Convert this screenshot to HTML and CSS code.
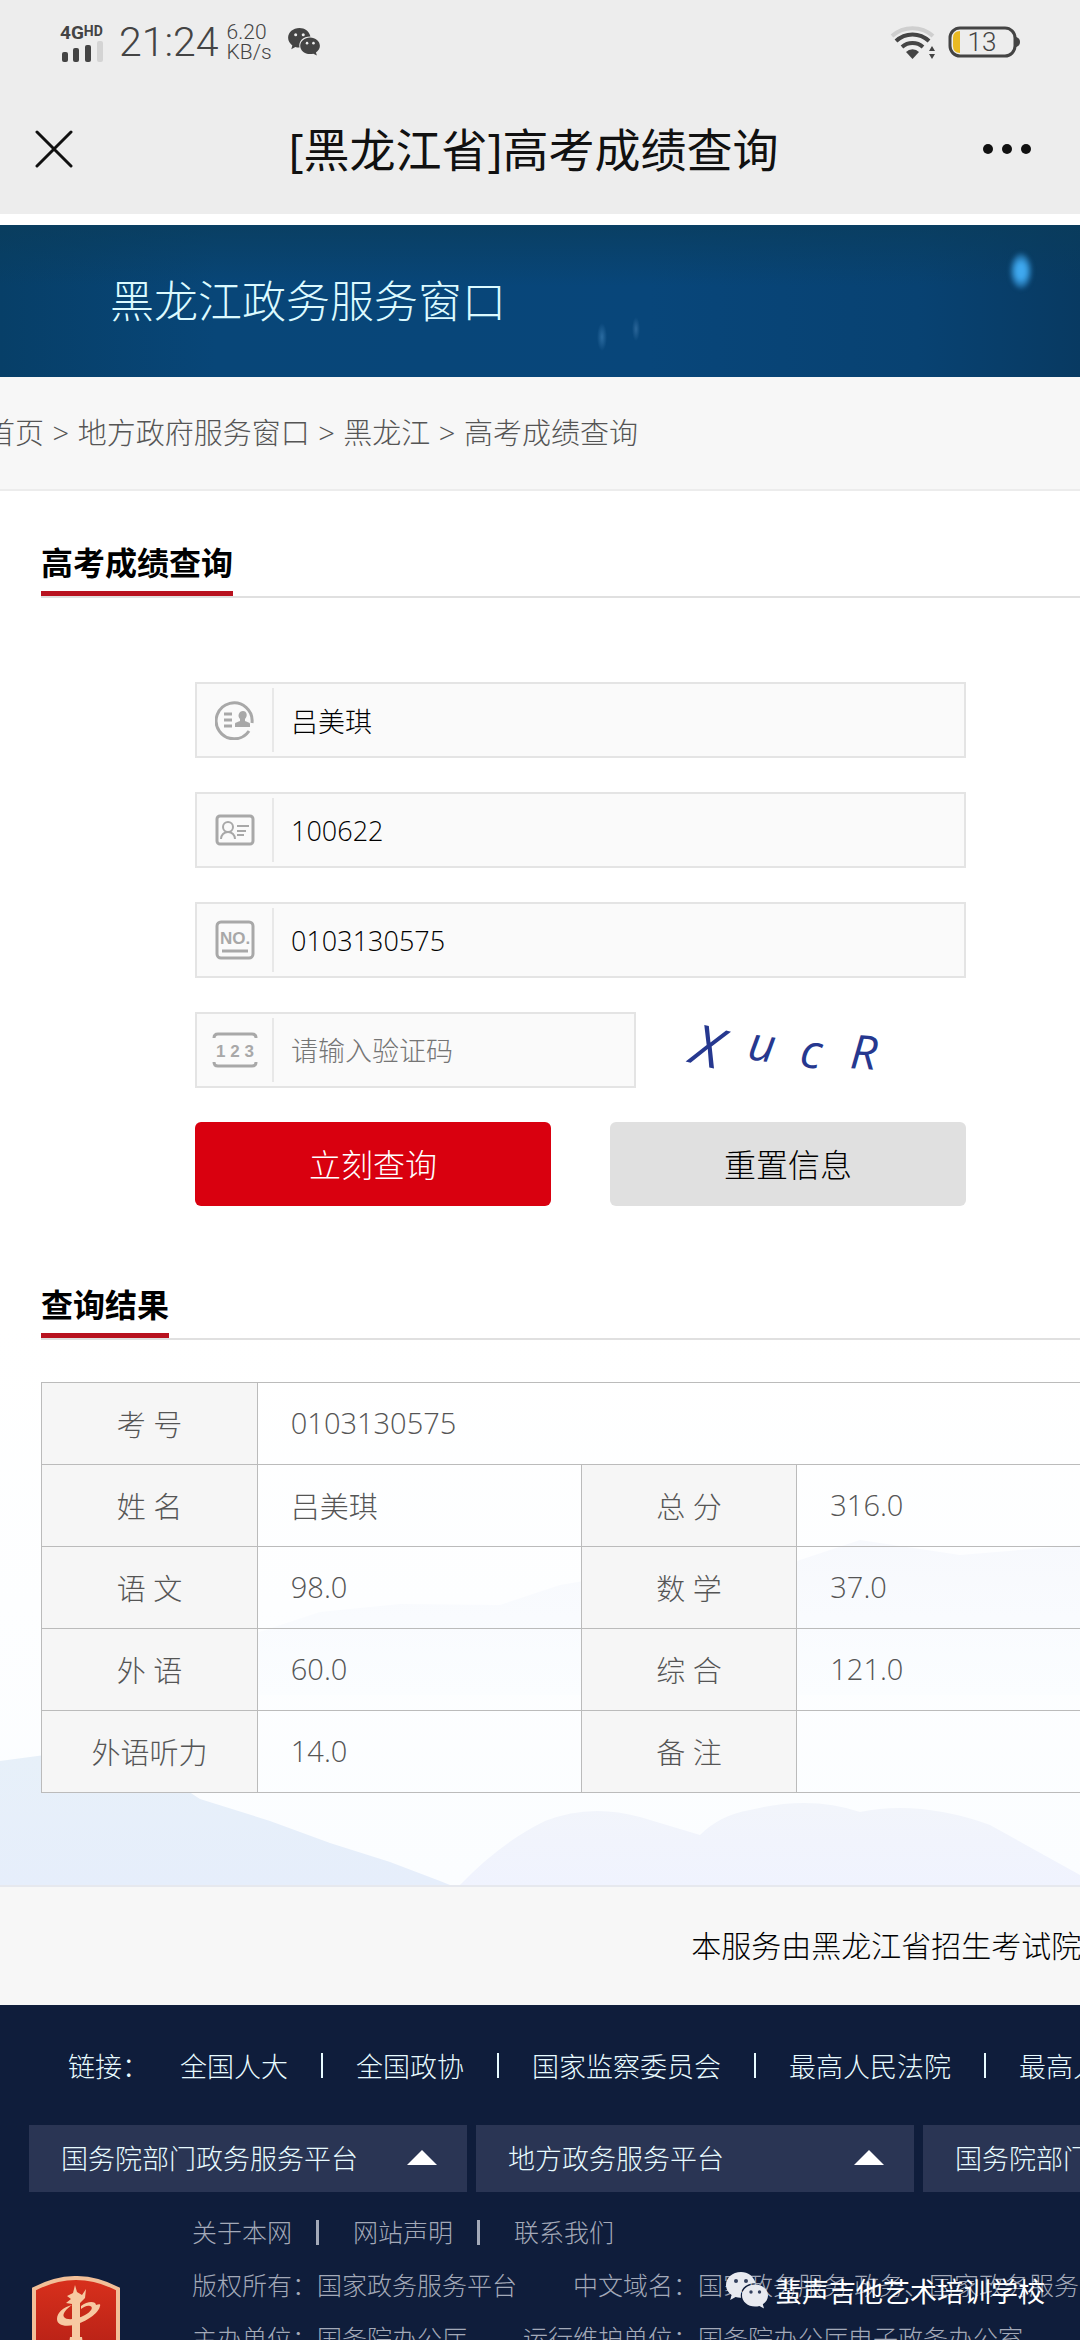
FILE: index.html
```
<!DOCTYPE html>
<html lang="zh-CN">
<head>
    <meta charset="UTF-8">
    <meta name="viewport" content="width=device-width, initial-scale=1.0">
    <title>[黑龙江省]高考成绩查询</title>
    <link rel="stylesheet" href="styles.css">
</head>
<body>
    <svg class="defs" width="0" height="0" aria-hidden="true">
        <symbol id="icon-wechat" viewBox="0 0 42 37">
            <path d="M15 0C6.500 0 0 5.800 0 13c0 4.200 2.200 7.700 5.600 10L4.200 28l5.400-2.900c1.800.5 3.600.8 5.400.7C13.500 17 20 11 29.500 11.200 28 4.600 22 0 15 0z"/>
            <path d="M29 12.500c-7.200 0-13 4.900-13 11s5.800 11 13 11c1.600 0 3-.2 4.400-.6l4.600 2.600-1.200-4.200c3.200-2.100 5.200-5.200 5.200-8.800 0-6.100-5.800-11-13-11z"/>
            <g class="eyes">
                <circle cx="10" cy="9" r="2"/>
                <circle cx="20" cy="9" r="2"/>
                <circle cx="25" cy="20" r="1.700"/>
                <circle cx="33.500" cy="20" r="1.700"/>
            </g>
        </symbol>
    </svg>

    <div class="screen">
        <header class="topbar">
            <div class="status">
                <div class="signal">
                    <div class="network">4G<small>HD</small></div>
                    <svg width="44" height="21" viewBox="0 0 44 21" aria-hidden="true">
                        <rect x="2" y="11" width="6" height="10" rx="2" fill="#444"/>
                        <rect x="13" y="7" width="6" height="14" rx="2" fill="#444"/>
                        <rect x="25" y="4" width="6" height="17" rx="2" fill="#444"/>
                        <rect x="37" y="0" width="6" height="21" rx="2" fill="#d4d4d4"/>
                    </svg>
                </div>
                <div class="time">21:24</div>
                <div class="speed">6.20<br>KB/s</div>
                <svg class="wechat-status" width="32" height="28" aria-hidden="true"><use href="#icon-wechat"/></svg>
                <svg class="wifi" width="46" height="34" viewBox="0 0 46 34" fill="none" aria-hidden="true">
                    <path d="M2 11a31 31 0 0 1 41 0" stroke="#cfcfcf" stroke-width="4"/>
                    <path d="M6 16a24 24 0 0 1 33 0" stroke="#444" stroke-width="4"/>
                    <path d="M12 22a16 16 0 0 1 21 0" stroke="#444" stroke-width="4"/>
                    <path d="M16 27a9 9 0 0 1 13 0l-6.500 7z" fill="#444"/>
                    <path d="M42 21l3 5h-6zM42 34l3-5h-6z" fill="#444"/>
                </svg>
                <svg class="battery" width="72" height="32" viewBox="0 0 72 32" aria-hidden="true">
                    <rect x="2" y="2" width="65" height="28" rx="10" fill="none" stroke="#444" stroke-width="3"/>
                    <path d="M68 11q4 1 4 5t-4 5z" fill="#444"/>
                    <path d="M12 5v22q-7 0-7-7v-8q0-7 7-7z" fill="#e8b923"/>
                    <text x="34" y="25" text-anchor="middle">13</text>
                </svg>
            </div>
            <div class="nav">
                <button type="button" class="nav-btn" aria-label="关闭">
                    <svg width="38" height="38" viewBox="0 0 38 38" stroke="#111" stroke-width="3" stroke-linecap="round"><path d="M2 2l34 34M36 2L2 36"/></svg>
                </button>
                <h1>[黑龙江省]高考成绩查询</h1>
                <button type="button" class="nav-btn" aria-label="更多">
                    <svg width="50" height="12" viewBox="0 0 50 12" fill="#111"><circle cx="6" cy="6" r="5"/><circle cx="25" cy="6" r="5"/><circle cx="44" cy="6" r="5"/></svg>
                </button>
            </div>
        </header>

        <div class="banner">
            <h2>黑龙江政务服务窗口</h2>
            <i class="spark"></i>
        </div>

        <nav class="crumbs">
            <a href="#">首页</a> &gt; <a href="#">地方政府服务窗口</a> &gt; <a href="#">黑龙江</a> &gt; <a href="#">高考成绩查询</a>
        </nav>

        <main>
            <div class="section-title"><h3>高考成绩查询</h3></div>

            <form class="query-form">
                <div class="field">
                    <label for="name" aria-label="姓名">
                        <svg width="40" height="40" viewBox="0 0 40 40" fill="none" stroke="#a8a8a8" stroke-width="3">
                            <path d="M37 23A18 18 0 1 0 34 31"/>
                            <path d="M9 14h8M9 20h8M9 26h8"/>
                            <path d="M20 27h15v-3c0-2-4-2-5-3v-2c3-3 2-8-2-8s-6 5-3 8v2c-1 1-5 1-5 3z" fill="#a8a8a8" stroke="none"/>
                        </svg>
                    </label>
                    <input type="text" id="name" value="吕美琪">
                </div>
                <div class="field">
                    <label for="idcard" aria-label="证件号后六位">
                        <svg width="40" height="32" viewBox="0 0 40 32" fill="none" stroke="#a8a8a8" stroke-width="2">
                            <rect x="2" y="2" width="36" height="28" rx="3" stroke-width="3"/>
                            <circle cx="13" cy="13" r="5"/>
                            <path d="M6 25c0-4 3-7 7-7s7 3 7 7M22 12h12M22 17h9M22 21h7"/>
                        </svg>
                    </label>
                    <input type="text" id="idcard" value="100622">
                </div>
                <div class="field">
                    <label for="number" aria-label="考号">
                        <svg width="40" height="40" viewBox="0 0 40 40" fill="none" stroke="#a8a8a8" stroke-width="3">
                            <rect x="2" y="2" width="36" height="36" rx="4"/>
                            <path d="M7 31h26"/>
                            <text x="20" y="24" text-anchor="middle" class="icon-text">NO.</text>
                        </svg>
                    </label>
                    <input type="text" id="number" value="0103130575">
                </div>
                <div class="code-row">
                    <div class="field">
                        <label for="code" aria-label="验证码">
                            <svg width="46" height="36" viewBox="0 0 46 36" fill="none" stroke="#a8a8a8" stroke-width="3">
                                <path d="M2 6q0-4 4-4h34q4 0 4 4M2 30q0 4 4 4h34q4 0 4-4"/>
                                <text x="23" y="25" text-anchor="middle" class="icon-text">1 2 3</text>
                            </svg>
                        </label>
                        <input type="text" id="code" placeholder="请输入验证码">
                    </div>
                    <svg class="captcha" width="210" height="60" viewBox="0 0 210 60" role="img" aria-label="验证码图片">
                        <text x="8" y="46" class="captcha-big" transform="rotate(14 22 30)">X</text>
                        <text x="64" y="41" transform="rotate(8 77 30)">u</text>
                        <text x="116" y="48" transform="rotate(8 128 36)">c</text>
                        <text x="166" y="49" transform="rotate(4 180 36)">R</text>
                    </svg>
                </div>
                <div class="buttons">
                    <button type="submit" class="btn btn-primary">立刻查询</button>
                    <button type="reset" class="btn">重置信息</button>
                </div>
            </form>

            <section class="results">
                <svg class="hills" viewBox="0 0 1080 560" preserveAspectRatio="none" aria-hidden="true">
                    <defs>
                        <linearGradient id="hillA" x1="0" y1="0" x2="0" y2="1">
                            <stop offset="0" stop-color="#e7f0f9"/>
                            <stop offset="1" stop-color="#e6eefb"/>
                        </linearGradient>
                        <linearGradient id="hillB" x1="0" y1="0" x2="0" y2="1">
                            <stop offset="0" stop-color="#f2f5fb"/>
                            <stop offset="1" stop-color="#f0f3fe"/>
                        </linearGradient>
                        <linearGradient id="sky" x1="0" y1="0" x2="0" y2="1">
                            <stop offset="0" stop-color="#fff"/>
                            <stop offset="1" stop-color="#fbfdff"/>
                        </linearGradient>
                        <linearGradient id="mist" x1="0" y1="0" x2="0" y2="1">
                            <stop offset="0" stop-color="#f7f9fd"/>
                            <stop offset="1" stop-color="#fbfdff"/>
                        </linearGradient>
                    </defs>
                    <path d="M0 0H1080V560H0z" fill="url(#sky)"/>
                    <path d="M250 310L320 287 400 279 500 280 560 260 620 250 740 255 800 235 860 215 960 230 1080 220V370H250z" fill="url(#mist)"/>
                    <path d="M460 560Q500 518 545 496Q590 478 640 492L700 510Q720 490 750 485Q810 470 860 487Q920 475 990 500L1080 550V560z" fill="url(#hillB)"/>
                    <path d="M0 436L45 430 110 441 160 448 200 474 270 496 330 518 390 537 440 556 450 560H0z" fill="url(#hillA)"/>
                </svg>
                <div class="section-title"><h3>查询结果</h3></div>
                <table>
                    <colgroup>
                        <col class="col-label"><col><col class="col-label"><col>
                    </colgroup>
                    <tr><th>考 号</th><td colspan="3">0103130575</td></tr>
                    <tr><th>姓 名</th><td>吕美琪</td><th>总 分</th><td>316.0</td></tr>
                    <tr><th>语 文</th><td>98.0</td><th>数 学</th><td>37.0</td></tr>
                    <tr><th>外 语</th><td>60.0</td><th>综 合</th><td>121.0</td></tr>
                    <tr><th>外语听力</th><td>14.0</td><th>备 注</th><td></td></tr>
                </table>
            </section>
        </main>

        <p class="provider">本服务由黑龙江省招生考试院</p>

        <footer class="footer">
            <div class="links">
                <span>链接：</span>
                <ul>
                    <li><a href="#">全国人大</a></li>
                    <li><a href="#">全国政协</a></li>
                    <li><a href="#">国家监察委员会</a></li>
                    <li><a href="#">最高人民法院</a></li>
                    <li><a href="#">最高人民检察院</a></li>
                </ul>
            </div>
            <div class="platforms">
                <button type="button">国务院部门政务服务平台<i class="arrow"></i></button>
                <button type="button">地方政务服务平台<i class="arrow"></i></button>
                <button type="button">国务院部门<i class="arrow"></i></button>
            </div>
            <div class="about">
                <svg class="badge" width="88" height="110" viewBox="0 0 88 110" aria-hidden="true">
                    <defs>
                        <linearGradient id="badgeRed" x1="0" y1="0" x2="0" y2="1">
                            <stop offset="0" stop-color="#d8301c"/>
                            <stop offset="1" stop-color="#a81a14"/>
                        </linearGradient>
                    </defs>
                    <path d="M2 13Q44-9 86 13V108H2z" fill="url(#badgeRed)" stroke="#f2bf98" stroke-width="4"/>
                    <g fill="#f7c9a2">
                        <path d="M41 17l2-8 2 7 5 3 4-6-1 9-5 5v34h2l1 7H37l1-7h2V28l-6-1 5-4-4-3z"/>
                        <path d="M49 30c6-5 15-5 15-1 3-1 5-1 4 1-1 7-14 16-26 19-10 2-17 0-17-6s6-12 15-14c-6 4-10 9-8 12 3 4 14 2 21-2 6-3 9-8 5-9-3-1-6 1-9 3z"/>
                    </g>
                </svg>
                <div class="about-text">
                    <div class="about-links">
                        <a href="#">关于本网</a><a href="#">网站声明</a><a href="#">联系我们</a>
                    </div>
                    <p><span>版权所有：国家政务服务平台</span><span>中文域名：国家政务服务.政务、国家政务服务</span></p>
                    <p><span>主办单位：国务院办公厅</span><span>运行维护单位：国务院办公厅电子政务办公室</span></p>
                </div>
            </div>
        </footer>

        <div class="watermark">
            <svg width="42" height="37" aria-hidden="true"><use href="#icon-wechat"/></svg>
            <span>蜚声吉他艺术培训学校</span>
        </div>
    </div>
</body>
</html>
```

FILE: styles.css
```
* {
    box-sizing: border-box;
}
body {
    margin: 0;
    background: #fff;
    color: #000;
    font-family: "Open Sans", "Noto Sans CJK SC", sans-serif;
    font-weight: 300;
}
h1, h2, h3, p, ul {
    margin: 0;
    padding: 0;
}
a {
    color: inherit;
    text-decoration: none;
}
button, input {
    font: inherit;
    color: inherit;
}
.defs {
    position: absolute;
}
.screen {
    position: relative;
    height: 100vh;
    display: flex;
    flex-direction: column;
    overflow: hidden;
    white-space: nowrap;
}
.screen > * {
    flex-shrink: 0;
}

/* top bar */
.topbar {
    background: #ededed;
    margin-bottom: 11px;
}
.status {
    height: 84px;
    padding: 0 60px;
    display: flex;
    align-items: center;
    color: #444;
    font-family: Roboto, sans-serif;
}
.signal {
    width: 48px;
    margin-right: 11px;
}
.signal svg {
    display: block;
}
.network {
    font-size: 19px;
    line-height: 16px;
    font-weight: 700;
}
.network small {
    font-size: 14px;
    vertical-align: 3px;
}
.time {
    font-size: 41px;
    margin-right: 8px;
}
.speed {
    font-size: 21px;
    line-height: 20px;
}
.wechat-status {
    margin-left: 16px;
    fill: #444;
}
.wechat-status, .watermark {
    --eye: #ededed;
}
.eyes {
    fill: var(--eye);
}
.wifi {
    margin-left: auto;
    margin-right: 12px;
}
.battery text {
    font-size: 26px;
    fill: #444;
}
.nav {
    height: 130px;
    padding: 0 48px 0 35px;
    display: flex;
    align-items: center;
    justify-content: space-between;
}
.nav h1 {
    font-size: 46px;
    line-height: 60px;
    font-weight: 400;
    color: #111;
}
.nav-btn {
    width: 50px;
    padding: 0;
    border: 0;
    background: none;
    display: flex;
}

/* banner */
.banner {
    position: relative;
    height: 152px;
    padding: 0 110px 4px;
    display: flex;
    align-items: center;
    background:
        radial-gradient(ellipse 5px 14px at 602px 112px, #2b6ba0, transparent),
        radial-gradient(ellipse 4px 12px at 636px 104px, #2a6598, transparent),
        linear-gradient(180deg, rgba(10, 60, 90, 0.7), transparent 40%),
        linear-gradient(90deg, #073f68, #084678 20%, #08467a 60%, #084272 85%, #083a62);
}
.banner h2 {
    font-size: 44px;
    font-weight: 300;
    color: #dcfaff;
}
.spark {
    position: absolute;
    top: 28px;
    right: 48px;
    width: 22px;
    height: 36px;
    border-radius: 50%;
    background: radial-gradient(ellipse at center, #3fa9f0 30%, rgba(30, 120, 190, 0.2) 75%);
    filter: blur(2px);
}

/* breadcrumb */
.crumbs {
    height: 114px;
    padding-left: 1px;
    text-indent: -16px;
    line-height: 112px;
    font-size: 29px;
    color: #555;
    background: #f7f7f7;
    border-bottom: 2px solid #ececec;
}
.crumbs a {
    margin: 0 1px;
}

.section-title {
    margin-left: 41px;
    border-bottom: 2px solid #e0e0e0;
    display: flex;
}
.section-title h3 {
    box-sizing: content-box;
    height: 56px;
    line-height: 56px;
    font-size: 32px;
    font-weight: 700;
    border-bottom: 5px solid #b8121f;
}

/* query form */
main {
    padding-top: 44px;
}
.query-form {
    margin: 84px 114px 71px 195px;
    display: grid;
    gap: 34px;
}
.field {
    min-width: 0;
    height: 76px;
    display: flex;
    align-items: center;
    background: #fafafa;
    border: 2px solid #e4e4e4;
}
.field label {
    width: 77px;
    height: 64px;
    display: flex;
    align-items: center;
    justify-content: center;
    border-right: 2px solid #e8e8e8;
}
.field input {
    flex: 1;
    min-width: 0;
    height: 100%;
    padding: 0 17px;
    border: 0;
    outline: 0;
    background: none;
    font-size: 27px;
}
.field input::placeholder {
    color: #757575;
    opacity: 1;
}
.icon-text {
    font-family: "Liberation Sans", sans-serif;
    font-size: 17px;
    font-weight: 700;
    fill: #a8a8a8;
    stroke: none;
}
.code-row {
    display: grid;
    grid-template-columns: 4fr 3fr;
}
.captcha {
    margin-left: 48px;
    align-self: center;
    fill: #26388f;
    font-family: "Open Sans", sans-serif;
    font-size: 47px;
    font-style: italic;
    font-weight: 400;
}
.captcha-big {
    font-size: 56px;
}
.buttons {
    display: grid;
    grid-template-columns: 1fr 1fr;
    gap: 59px;
}
.btn {
    height: 84px;
    padding: 0 0 2px;
    border: 0;
    border-radius: 6px;
    background: #e0e0e0;
    font-size: 32px;
}
.btn-primary {
    background: #d9000f;
    color: #fff;
}

/* results */
.results {
    position: relative;
    padding-bottom: 92px;
    border-bottom: 2px solid #e6e8ee;
}
.hills {
    position: absolute;
    left: 0;
    bottom: 0;
    width: 100%;
    height: 560px;
    z-index: -1;
}
table {
    width: 100%;
    margin: 42px 0 0 41px;
    table-layout: fixed;
    border-collapse: collapse;
    font-size: 29px;
    color: #555;
}
.col-label {
    width: 20%;
}
th, td {
    height: 82px;
    padding: 0 33px 2px;
    border: 1px solid #bbb;
    font-weight: 300;
    text-align: left;
}
th {
    padding: 0 0 2px;
    background: #f6f6f6;
    text-align: center;
}

.provider {
    padding-left: 64%;
    line-height: 118px;
    font-size: 30px;
    background: #f7f7f7;
}

/* footer */
.footer {
    background: #0f1d3b;
    color: #e8fbff;
    font-size: 27px;
}
.links {
    height: 120px;
    padding-left: 68px;
    display: flex;
    align-items: center;
}
.links ul {
    margin-left: 31px;
    display: flex;
    list-style: none;
}
.links li {
    display: flex;
    align-items: center;
}
.links li + li::before {
    content: "";
    width: 2px;
    height: 25px;
    margin: 0 33px;
    background: #e8fbff;
}
.platforms {
    padding-left: 29px;
    display: flex;
    gap: 9px;
}
.platforms button {
    flex: 0 0 438px;
    height: 67px;
    padding: 0 30px 2px 32px;
    border: 0;
    background: #2a3554;
    display: flex;
    align-items: center;
    justify-content: space-between;
}
.arrow {
    border: 15px solid transparent;
    border-top: 0;
    border-bottom-color: #fff;
}
.about {
    padding: 14px 0 0 32px;
    display: flex;
    font-size: 25px;
    line-height: 53px;
    color: #a3a9b8;
}
.badge {
    margin: 70px 72px 0 0;
}
.about-links {
    display: flex;
    align-items: center;
}
.about-links a + a::before {
    content: "";
    display: inline-block;
    width: 3px;
    height: 25px;
    margin: 0 34px 0 24px;
    vertical-align: -3px;
    background: #a3a9b8;
}
.about-text span + span {
    margin-left: 56px;
}

/* account mark over the page */
.watermark {
    position: absolute;
    right: 35px;
    bottom: 30px;
    display: flex;
    align-items: center;
    gap: 7px;
    font-size: 27px;
    font-weight: 400;
    color: #fff;
    fill: #e8eaf0;
    --eye: #33405e;
}
```
